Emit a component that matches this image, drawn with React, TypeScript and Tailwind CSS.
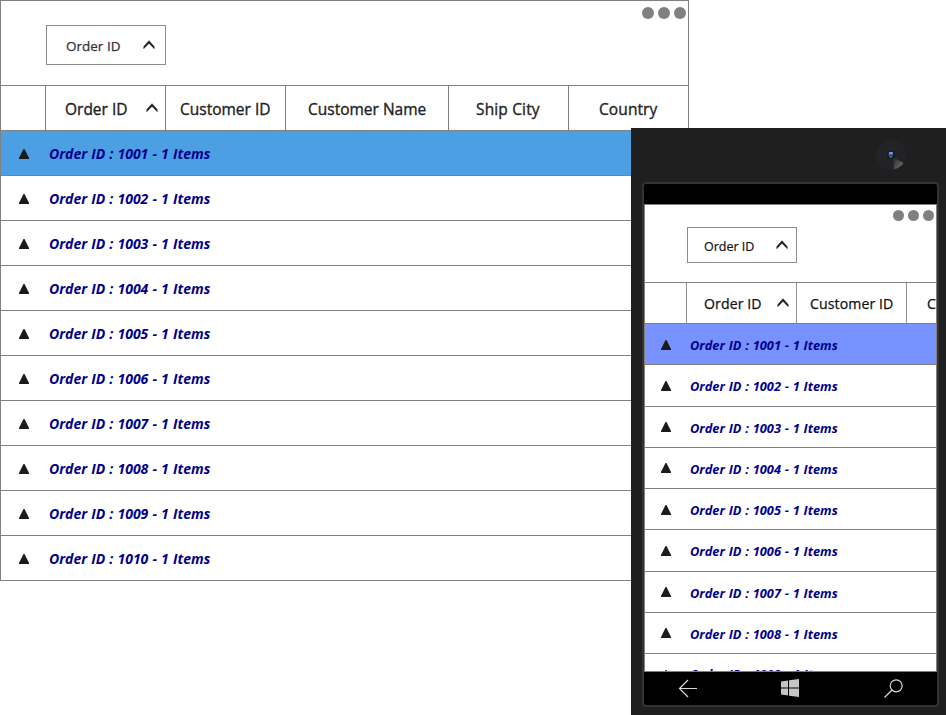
import React from 'react';

const desktopRows = [1001, 1002, 1003, 1004, 1005, 1006, 1007, 1008, 1009, 1010];
const phoneRows = [1001, 1002, 1003, 1004, 1005, 1006, 1007, 1008, 1009];

function Caret({ className }: { className: string }) {
  return (
    <svg className={className} width="12" height="10" viewBox="0 0 12 10">
      <path d="M0.6 9V6.5L6 0.6L11.4 6.5V9L6 3.6Z" fill="#222222" stroke="#222222" strokeWidth="0.2" />
    </svg>
  );
}

function Triangle({ className }: { className: string }) {
  return (
    <svg className={className} width="10" height="10" viewBox="0 0 10 10">
      <path d="M4.5 0H5.5L10 9V10H0V9Z" fill="#1b1b1b" />
    </svg>
  );
}

function DesktopGrid() {
  return (
    <div className="w-[689px] border border-[#808080] bg-white">
      <div className="flex h-[84px] justify-between">
        <div className="mt-6 ml-[45px] flex h-10 w-[120px] border border-[#8c8c8c] pl-[19px]">
          <span className="mt-[11px] w-[64px] text-[13.5px] leading-[18px] text-[#333333] [-webkit-text-stroke:0.25px]">Order ID</span>
          <Caret className="mt-[14px] ml-[13px]" />
        </div>
        <div className="mt-[6px] mr-[2px] flex h-3 gap-1">
          <i className="size-3 rounded-full bg-[#808080]" />
          <i className="size-3 rounded-full bg-[#808080]" />
          <i className="size-3 rounded-full bg-[#808080]" />
        </div>
      </div>
      <div className="flex h-[46px] border-y border-[#808080] text-[15.5px] leading-[47px] whitespace-nowrap text-[#222222] [-webkit-text-stroke:0.35px]">
        <div className="w-[45px] border-r border-[#808080]" />
        <div className="flex w-[120px] border-r border-[#808080] pl-[19px]">
          <span className="w-[80px]">Order ID</span>
          <Caret className="mt-[17px] ml-px" />
        </div>
        <div className="w-[120px] border-r border-[#808080] pl-[14px]"><span>Customer ID</span></div>
        <div className="w-[163px] border-r border-[#808080] pl-[22px]"><span>Customer Name</span></div>
        <div className="w-[120px] border-r border-[#808080] pl-[27px]"><span className="tracking-[0.15px]">Ship City</span></div>
        <div className="pl-[30px]"><span className="tracking-[0.1px]">Country</span></div>
      </div>
      {desktopRows.map((id, i) => (
        <div
          key={id}
          className={`flex h-[45px] border-b border-[#808080] last:h-[44px] last:border-b-0 ${i === 0 ? 'bg-[#4d9fe4]' : ''}`}
        >
          <Triangle className="mt-[18px] ml-[18px]" />
          <span className="ml-5 text-[14px] leading-[46px] font-bold whitespace-nowrap text-[#00008b] italic [word-spacing:0.5px]">
            Order ID : {id} - 1 Items
          </span>
        </div>
      ))}
    </div>
  );
}

function PhoneGrid() {
  return (
    <div className="h-[468px] overflow-hidden border border-[#808080] bg-white">
      <div className="flex h-[77px] justify-between">
        <div className="mt-[22px] ml-[42px] flex h-9 w-[110px] border border-[#8c8c8c] pl-4">
          <span className="mt-[9px] w-[73px] text-[12.5px] leading-[19px] whitespace-nowrap text-[#111111] [-webkit-text-stroke:0.2px]">Order ID</span>
          <Caret className="mt-[12px] -ml-px" />
        </div>
        <div className="mt-[5px] mr-[2px] flex gap-1">
          <i className="size-[11px] rounded-full bg-[#808080]" />
          <i className="size-[11px] rounded-full bg-[#808080]" />
          <i className="size-[11px] rounded-full bg-[#808080]" />
        </div>
      </div>
      <div className="flex h-[42px] border-y border-[#808080] text-[14.1px] leading-[42px] whitespace-nowrap text-[#111111] [-webkit-text-stroke:0.25px]">
        <div className="w-[42px] shrink-0 border-r border-[#909090]" />
        <div className="flex w-[110px] shrink-0 border-r border-[#909090] pl-[17px]">
          <span className="w-[73px] tracking-[0.1px]">Order ID</span>
          <Caret className="mt-[15px]" />
        </div>
        <div className="w-[110px] shrink-0 border-r border-[#909090] pl-[13px]"><span className="tracking-[0.1px]">Customer ID</span></div>
        <div className="w-[29px] shrink-0 overflow-hidden pl-[20px]"><span>C</span></div>
      </div>
      {phoneRows.map((id, i) => (
        <div key={id} className={`group flex h-[41.25px] border-b border-[#808080] ${i === 0 ? 'bg-[#7792ff]' : ''}`}>
          <Triangle className="mt-[15.5px] ml-[16px]" />
          <span className="ml-[19px] text-[12.8px] leading-[42.8px] font-bold whitespace-nowrap text-[#00008b] italic [word-spacing:0.5px] group-last:leading-[40.5px]">
            Order ID : {id} - 1 Items
          </span>
        </div>
      ))}
    </div>
  );
}

function Phone() {
  return (
    <div className="absolute top-32 left-[631px] h-[587px] w-[315px] bg-[#1f1f1f] px-[11px] font-['Open_Sans',sans-serif]">
      <div className="flex h-[54px] justify-end pt-3 pr-[29px]">
        <svg width="30" height="30" viewBox="0 0 30 30">
          <defs>
            <linearGradient id="glint" x1="0" y1="0" x2="1" y2="1">
              <stop offset="0" stopColor="#222327" />
              <stop offset="1" stopColor="#77777a" />
            </linearGradient>
          </defs>
          <circle cx="15" cy="15" r="15" fill="#222327" />
          <path d="M17 17L27.5 23A14.5 14.5 0 0 1 18 29.2Z" fill="url(#glint)" />
          <circle cx="15" cy="15" r="4" fill="#17181d" />
          <circle cx="14.8" cy="14.5" r="2.4" fill="#35559a" />
          <path d="M13 13H17" stroke="#a9a8de" strokeWidth="1.4" />
          <path d="M13.5 17H16" stroke="#168577" strokeWidth="1.5" />
        </svg>
      </div>
      <div className="h-[525px] w-[297px] rounded-sm border-2 border-[#333333] bg-black">
        <div className="h-5" />
        <PhoneGrid />
        <div className="flex h-[33px] justify-between pt-[7px] pr-[34px] pl-[34px]">
          <svg width="20" height="19" viewBox="0 0 20 19" fill="none" stroke="#d8d8d8" strokeWidth="1.2">
            <path d="M19 9.5H1.5M10 1L1.5 9.5L10 18" />
          </svg>
          <svg className="-ml-[2px]" width="18" height="18" viewBox="0 0 18 18" fill="#c6c6c6">
            <path d="M0 2.5L7 1.5V8.5H0ZM8 1.3L18 0V8.5H8ZM0 9.5H7V16.5L0 15.5ZM8 9.5H18V18L8 16.7Z" />
          </svg>
          <svg width="19" height="19" viewBox="0 0 19 19" fill="none" stroke="#d8d8d8" strokeWidth="1.2">
            <circle cx="12.2" cy="6.8" r="6" />
            <path d="M8 11L0.5 18.5" />
          </svg>
        </div>
      </div>
    </div>
  );
}

export default function App() {
  return (
    <div className="relative h-[715px] w-[946px] overflow-hidden bg-white font-['Open_Sans',sans-serif]">
      <DesktopGrid />
      <Phone />
    </div>
  );
}
